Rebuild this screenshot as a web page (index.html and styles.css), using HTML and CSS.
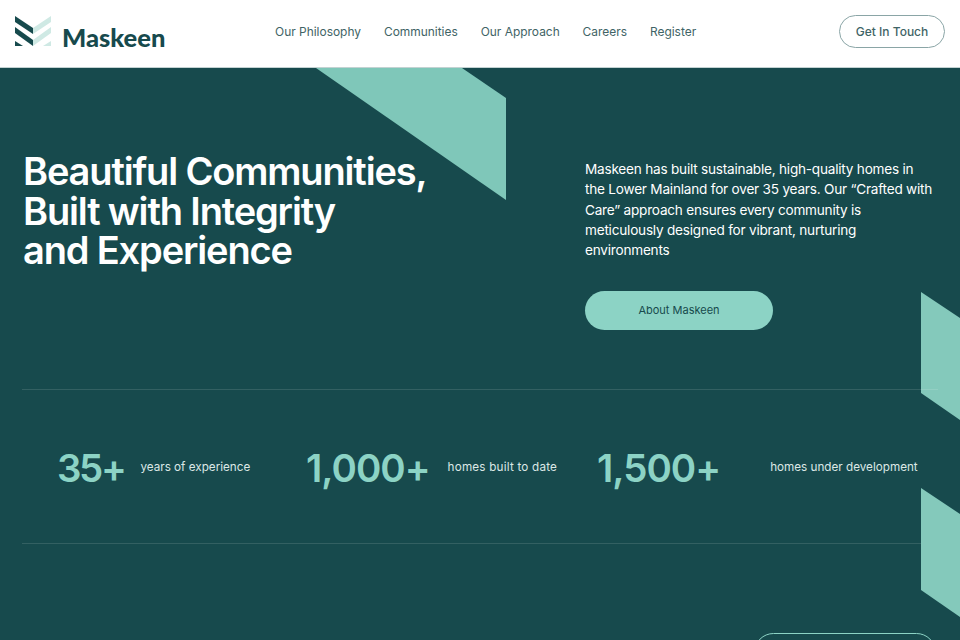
FILE: index.html
```html
<!DOCTYPE html>
<html lang="en">
<head>
<meta charset="utf-8">
<title>Maskeen</title>
<link rel="stylesheet" href="styles.css">
</head>
<body>
<header class="site-header">
  <a class="brand" href="#">
    <svg class="brand-mark" viewBox="0 0 36 31" width="36" height="31" aria-hidden="true">
      <g fill="#cfe9e4">
        <polygon points="36,1 36,7 18,19 18,13"/>
        <polygon points="36,12 36,18 18,31 18,25"/>
        <polygon points="36,26 36,31 28,31"/>
      </g>
      <g fill="#174a4d">
        <polygon points="0,1 18,13 18,19 0,7"/>
        <polygon points="0,12 18,25 18,31 0,18"/>
        <polygon points="0,26 8,31 0,31"/>
      </g>
    </svg>
    <span class="brand-name">Maskeen</span>
  </a>
  <nav class="main-nav">
    <a href="#">Our Philosophy</a>
    <a href="#">Communities</a>
    <a href="#">Our Approach</a>
    <a href="#">Careers</a>
    <a href="#">Register</a>
  </nav>
  <a class="touch-btn" href="#">Get In Touch</a>
</header>
<main class="hero">
  <svg class="deco deco-top" viewBox="0 0 190 132" width="190" height="132" aria-hidden="true"><polygon points="0,0 146,0 190,30 190,132"/></svg>
  <svg class="deco deco-right-a" viewBox="0 0 39 128" width="39" height="128" aria-hidden="true"><polygon points="0,0 39,26 39,128 0,101"/></svg>
  <section class="intro">
    <h1>Beautiful Communities,<br>Built with Integrity<br>and Experience</h1>
    <div class="intro-side">
      <p>Maskeen has built sustainable, high-quality homes in the Lower Mainland for over 35 years. Our “Crafted with Care” approach ensures every community is meticulously designed for vibrant, nurturing environments</p>
      <a class="about-btn" href="#">About Maskeen</a>
    </div>
  </section>
  <section class="stats">
    <div class="stat stat-a"><strong>35+</strong><span>years of experience</span></div>
    <div class="stat stat-b"><strong>1,000+</strong><span>homes built to date</span></div>
    <div class="stat stat-c"><strong>1,500+</strong><span>homes under development</span></div>
  </section>
  <svg class="deco deco-right-b" viewBox="0 0 39 129" width="39" height="129" aria-hidden="true"><polygon points="0,0 39,26 39,129 0,102"/></svg>
  <div class="more-row"><a class="more-btn" href="#"></a></div>
</main>
</body>
</html>
```
FILE: styles.css
```css
* { box-sizing: border-box; }
html, body { margin: 0; height: 640px; overflow: hidden; }
body { font-family: "Inter", "Liberation Sans", sans-serif; background: #174a4d; }
a { text-decoration: none; color: inherit; }

.site-header {
  height: 68px;
  background: #fff;
  border-bottom: 1px solid #c3d2d2;
  display: flex;
  align-items: center;
  padding: 0 15px;
  color: #174a4d;
}
.brand { display: flex; align-items: center; gap: 11px; width: 260px; flex: none; }
.brand-mark { flex: none; margin-top: -6px; }
.brand-name {
  font-family: "Lato", sans-serif;
  font-weight: 900;
  font-size: 25.5px;
  line-height: 30px;
  margin-top: 6px;
  color: #174a4d;
}
.main-nav { display: flex; gap: 22.9px; font-size: 11.95px; line-height: 20px; color: #3f6466; margin-top: -4px; }
.touch-btn {
  margin-left: auto;
  width: 106px;
  height: 33px;
  border: 1px solid #8aa5a6;
  border-radius: 17px;
  display: flex;
  align-items: center;
  justify-content: center;
  font-size: 12px;
  font-weight: 500;
  color: #3f6466;
  margin-top: -4px;
}

.hero { position: relative; height: 572px; background: #174a4d; overflow: hidden; color: #fff; }
.deco { position: absolute; fill: #7fc7b9; }
.deco-top { left: 316px; top: 0; }
.deco-right-a { right: 0; top: 224px; fill: #84c9bb; }
.deco-right-b { right: 0; top: 420px; fill: #84c9bb; }

.intro { position: relative; display: flex; height: 321px; padding: 0 23px; }
h1 {
  margin: 84px 0 0;
  width: 562px;
  flex: none;
  font-size: 38px;
  line-height: 39.5px;
  font-weight: 600;
  letter-spacing: -1.15px;
}
.intro-side { width: 350px; padding-top: 91px; }
.intro-side p { margin: 0; font-size: 13.6px; line-height: 20.3px; letter-spacing: -0.22px; color: #fff; }
.about-btn {
  display: flex;
  align-items: center;
  justify-content: center;
  width: 188px;
  height: 39px;
  margin-top: 31px;
  border-radius: 20px;
  background: #8cd3c5;
  color: #174a4d;
  font-size: 11px;
  font-weight: 400;
  padding-bottom: 2px;
}

.stats {
  position: relative;
  margin: 0 22px;
  height: 155px;
  border-top: 1px solid rgba(255, 255, 255, 0.12);
  border-bottom: 1px solid rgba(255, 255, 255, 0.12);
  display: flex;
  align-items: center;
  padding-top: 3px;
}
.stat { display: flex; align-items: center; }
.stat strong { font-size: 38.5px; line-height: 50px; font-weight: 600; color: #8cd3c5; letter-spacing: -1px; }
.stat span { font-size: 11.7px; line-height: 18px; color: #dce8e6; margin-top: -3px; }
.stat-a { margin-left: 35px; gap: 16px; width: 249px; }
.stat-a strong { letter-spacing: -2.4px; }
.stat-b { gap: 18px; width: 291px; }
.stat-b span { letter-spacing: 0.2px; }
.stat-c { gap: 50px; }

.more-row { position: relative; display: flex; justify-content: flex-end; padding: 89px 24px 0 0; }
.more-btn {
  display: block;
  width: 182px;
  height: 39px;
  border: 1px solid #8cd3c5;
  border-radius: 20px;
}
```
